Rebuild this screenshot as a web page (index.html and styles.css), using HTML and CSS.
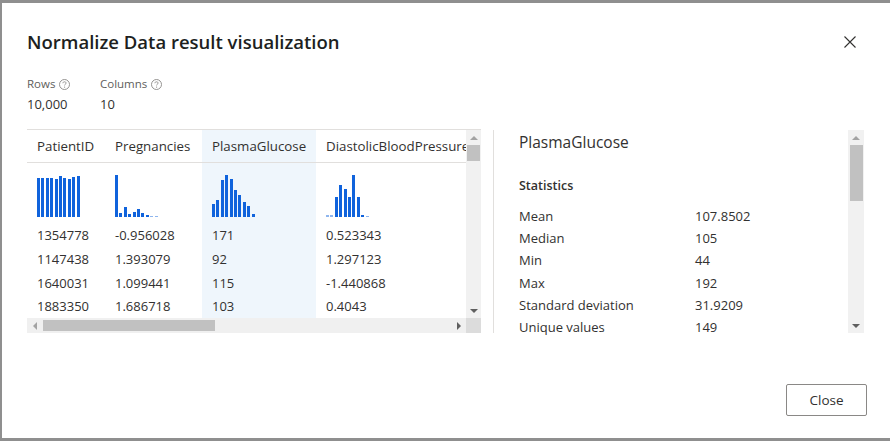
FILE: index.html
```html
<!DOCTYPE html>
<html>
<head>
<meta charset="utf-8">
<link rel="stylesheet" href="styles.css">
</head>
<body>
<div class="dialog">
  <div class="header">
    <h1 class="title">Normalize Data result visualization</h1>
    <button class="close-x" aria-label="Close">
      <svg width="12" height="12" viewBox="0 0 12 12"><path d="M0.5 0.5 L11.5 11.5 M11.5 0.5 L0.5 11.5" stroke="#323130" stroke-width="1.1" fill="none"/></svg>
    </button>
  </div>

  <div class="meta">
    <div class="meta-item">
      <div class="meta-label">Rows <svg class="qicon" width="11" height="11" viewBox="0 0 11 11"><circle cx="5.5" cy="5.5" r="5" fill="none" stroke="#8a8886" stroke-width="0.9"/><path d="M3.9 4.2 C3.9 3.3 4.6 2.8 5.5 2.8 C6.4 2.8 7.1 3.3 7.1 4.1 C7.1 5.1 5.6 5.2 5.6 6.4" fill="none" stroke="#8a8886" stroke-width="0.9"/><circle cx="5.6" cy="8.1" r="0.6" fill="#8a8886"/></svg></div>
      <div class="meta-value">10,000</div>
    </div>
    <div class="meta-item">
      <div class="meta-label">Columns <svg class="qicon" width="11" height="11" viewBox="0 0 11 11"><circle cx="5.5" cy="5.5" r="5" fill="none" stroke="#8a8886" stroke-width="0.9"/><path d="M3.9 4.2 C3.9 3.3 4.6 2.8 5.5 2.8 C6.4 2.8 7.1 3.3 7.1 4.1 C7.1 5.1 5.6 5.2 5.6 6.4" fill="none" stroke="#8a8886" stroke-width="0.9"/><circle cx="5.6" cy="8.1" r="0.6" fill="#8a8886"/></svg></div>
      <div class="meta-value">10</div>
    </div>
  </div>

  <div class="main">
    <div class="grid-wrap">
      <div class="grid-body">
        <div class="col c1">
          <div class="cell head">PatientID</div>
          <div class="cell hist">
            <div class="bars">
              <i style="height:39px"></i><i style="height:39px"></i><i style="height:39px"></i><i style="height:39px"></i><i style="height:38px"></i><i style="height:41px"></i><i style="height:39px"></i><i style="height:38px"></i><i style="height:40px"></i><i style="height:41px"></i>
            </div>
          </div>
          <div class="cell">1354778</div>
          <div class="cell">1147438</div>
          <div class="cell">1640031</div>
          <div class="cell">1883350</div>
        </div>
        <div class="col c2">
          <div class="cell head">Pregnancies</div>
          <div class="cell hist">
            <div class="bars">
              <i style="height:42px"></i><i style="height:4px"></i><i style="height:10px"></i><i style="height:3px"></i><i style="height:5px"></i><i style="height:8px"></i><i style="height:4px"></i><i style="height:2px"></i><i class="faint" style="height:1px"></i><i class="faint" style="height:1px"></i>
            </div>
          </div>
          <div class="cell">-0.956028</div>
          <div class="cell">1.393079</div>
          <div class="cell">1.099441</div>
          <div class="cell">1.686718</div>
        </div>
        <div class="col c3 selected">
          <div class="cell head">PlasmaGlucose</div>
          <div class="cell hist">
            <div class="bars">
              <i style="height:13px"></i><i style="height:17px"></i><i style="height:37px"></i><i style="height:42px"></i><i style="height:38px"></i><i style="height:27px"></i><i style="height:22px"></i><i style="height:15px"></i><i style="height:11px"></i><i style="height:3px"></i>
            </div>
          </div>
          <div class="cell">171</div>
          <div class="cell">92</div>
          <div class="cell">115</div>
          <div class="cell">103</div>
        </div>
        <div class="col c4">
          <div class="cell head">DiastolicBloodPressure</div>
          <div class="cell hist">
            <div class="bars">
              <i class="faint" style="height:2px"></i><i class="faint" style="height:2px"></i><i style="height:20px"></i><i style="height:32px"></i><i style="height:28px"></i><i style="height:20px"></i><i style="height:42px"></i><i style="height:20px"></i><i style="height:2px"></i><i class="faint" style="height:1px"></i>
            </div>
          </div>
          <div class="cell">0.523343</div>
          <div class="cell">1.297123</div>
          <div class="cell">-1.440868</div>
          <div class="cell">0.4043</div>
        </div>
      </div>
      <div class="vscroll">
        <span class="arrow up"></span>
        <span class="vthumb small"></span>
        <span class="spacer"></span>
        <span class="arrow down"></span>
      </div>
      <div class="hscroll">
        <span class="arrow left"></span>
        <span class="hthumb"></span>
        <span class="spacer"></span>
        <span class="arrow right"></span>
      </div>
      <div class="corner"></div>
    </div>

    <div class="divider"></div>

    <div class="details">
      <div class="details-content">
        <div class="details-title">PlasmaGlucose</div>
        <div class="section-title">Statistics</div>
        <div class="stats">
          <div class="stat"><span class="k">Mean</span><span class="v">107.8502</span></div>
          <div class="stat"><span class="k">Median</span><span class="v">105</span></div>
          <div class="stat"><span class="k">Min</span><span class="v">44</span></div>
          <div class="stat"><span class="k">Max</span><span class="v">192</span></div>
          <div class="stat"><span class="k">Standard deviation</span><span class="v">31.9209</span></div>
          <div class="stat"><span class="k">Unique values</span><span class="v">149</span></div>
        </div>
      </div>
      <div class="vscroll tall">
        <span class="arrow up"></span>
        <span class="vthumb big"></span>
        <span class="spacer"></span>
        <span class="arrow down"></span>
      </div>
    </div>
  </div>

  <div class="footer">
    <button class="btn">Close</button>
  </div>
</div>
</body>
</html>
```

FILE: styles.css
```css
* { box-sizing: border-box; }

html, body {
  margin: 0;
  padding: 0;
  height: 100%;
}

body {
  background: #8f8f8f;
  font-family: "Open Sans", "Noto Sans", "Liberation Sans", sans-serif;
  color: #323130;
  overflow: hidden;
  padding: 3px 0 3px 2px;
}

.dialog {
  background: #ffffff;
  height: 435px;
  padding: 25px 26px 0 25px;
  display: flex;
  flex-direction: column;
}

.header {
  display: flex;
  justify-content: space-between;
  align-items: center;
  height: 28px;
}

.title {
  margin: 0;
  font-size: 18.5px;
  font-weight: 600;
  line-height: 28px;
  color: #201f1e;
}

.close-x {
  border: 0;
  background: transparent;
  padding: 0;
  width: 12px;
  height: 12px;
  margin-right: 8px;
  display: flex;
}

.meta {
  display: flex;
  gap: 0;
  margin-top: 20px;
}

.meta-item {
  display: flex;
  flex-direction: column;
  gap: 2px;
}

.meta-item:first-child { width: 73px; }

.meta-label {
  font-size: 11.5px;
  line-height: 16px;
  color: #605e5c;
  display: flex;
  align-items: center;
  gap: 4px;
}

.meta-value {
  font-size: 13px;
  line-height: 20px;
  color: #323130;
}

.main {
  display: flex;
  margin-top: 15px;
  height: 204px;
}

.grid-wrap {
  width: 454px;
  border-top: 1px solid #e1dfdd;
  display: grid;
  grid-template-columns: 439px 15px;
  grid-template-rows: 188px 15px;
}

.grid-body {
  display: flex;
  overflow: hidden;
  font-size: 13px;
}

.col { flex: none; overflow: hidden; }
.c1 { width: 78px; }
.c2 { width: 97px; }
.c3 { width: 114px; }
.c4 { width: 150px; }
.selected { background: #eff6fc; }

.cell {
  height: 23.8px;
  line-height: 23.8px;
  padding-left: 10px;
  white-space: nowrap;
}

.cell.head {
  height: 33px;
  line-height: 32px;
  font-size: 13.3px;
  border-bottom: 1px solid #e1dfdd;
}

.cell.hist {
  height: 61px;
  padding-top: 11px;
  padding-left: 10px;
}

.bars {
  display: flex;
  align-items: flex-end;
  height: 43px;
  gap: 1.4px;
}

.bars i {
  display: block;
  width: 3px;
  background: #1063dc;
}

.bars i.faint { background: #8fb6ee; }

.vscroll {
  background: #f1f1f1;
  display: flex;
  flex-direction: column;
  align-items: center;
}

.vscroll.tall {
  width: 16px;
  flex: none;
}

.hscroll {
  background: #f0f0f0;
  display: flex;
  align-items: center;
}

.corner { background: #dcdcdc; }

.spacer { flex: 1; }

.arrow {
  flex: none;
  width: 15px;
  height: 15px;
  position: relative;
}

.arrow::after {
  content: "";
  position: absolute;
  left: 50%;
  top: 50%;
  width: 0;
  height: 0;
  border: 4px solid transparent;
}

.arrow.up::after {
  border-bottom: 4px solid #a3a3a3;
  border-top-width: 0;
  transform: translate(-50%, -50%);
}
.arrow.down::after {
  border-top: 4px solid #5f5f5f;
  border-bottom-width: 0;
  transform: translate(-50%, -50%);
}
.arrow.left::after {
  border-right: 4px solid #a3a3a3;
  border-left-width: 0;
  transform: translate(-50%, -50%);
}
.arrow.right::after {
  border-left: 4px solid #5f5f5f;
  border-right-width: 0;
  transform: translate(-50%, -50%);
}

.vthumb {
  width: 13px;
  background: #c1c1c1;
  flex: none;
}
.vthumb.small { height: 16px; }
.vthumb.big { height: 56px; }

.hthumb {
  height: 11px;
  width: 172px;
  background: #c1c1c1;
  margin-left: 1px;
  flex: none;
}

.divider {
  width: 1px;
  background: #e1dfdd;
  margin-left: 12px;
  margin-top: 1px;
}

.details {
  flex: 1;
  display: flex;
  padding-top: 1px;
}

.details-content {
  flex: 1;
  padding-left: 25px;
}

.details-title {
  font-size: 15.5px;
  line-height: 22px;
  margin-top: 1px;
  color: #323130;
}

.section-title {
  margin-top: 24px;
  font-size: 12.5px;
  font-weight: 600;
  line-height: 18px;
}

.stats {
  margin-top: 10px;
  font-size: 13px;
}

.stat {
  display: flex;
  height: 22.2px;
  line-height: 22.2px;
}

.stat .k { width: 176px; flex: none; }

.footer {
  display: flex;
  justify-content: flex-end;
  margin-top: 51px;
  margin-right: -3px;
}

.btn {
  width: 81px;
  height: 32px;
  border: 1px solid #8a8886;
  border-radius: 2px;
  background: #fff;
  font-family: inherit;
  font-size: 13.5px;
  color: #323130;
  padding: 0;
}
```
